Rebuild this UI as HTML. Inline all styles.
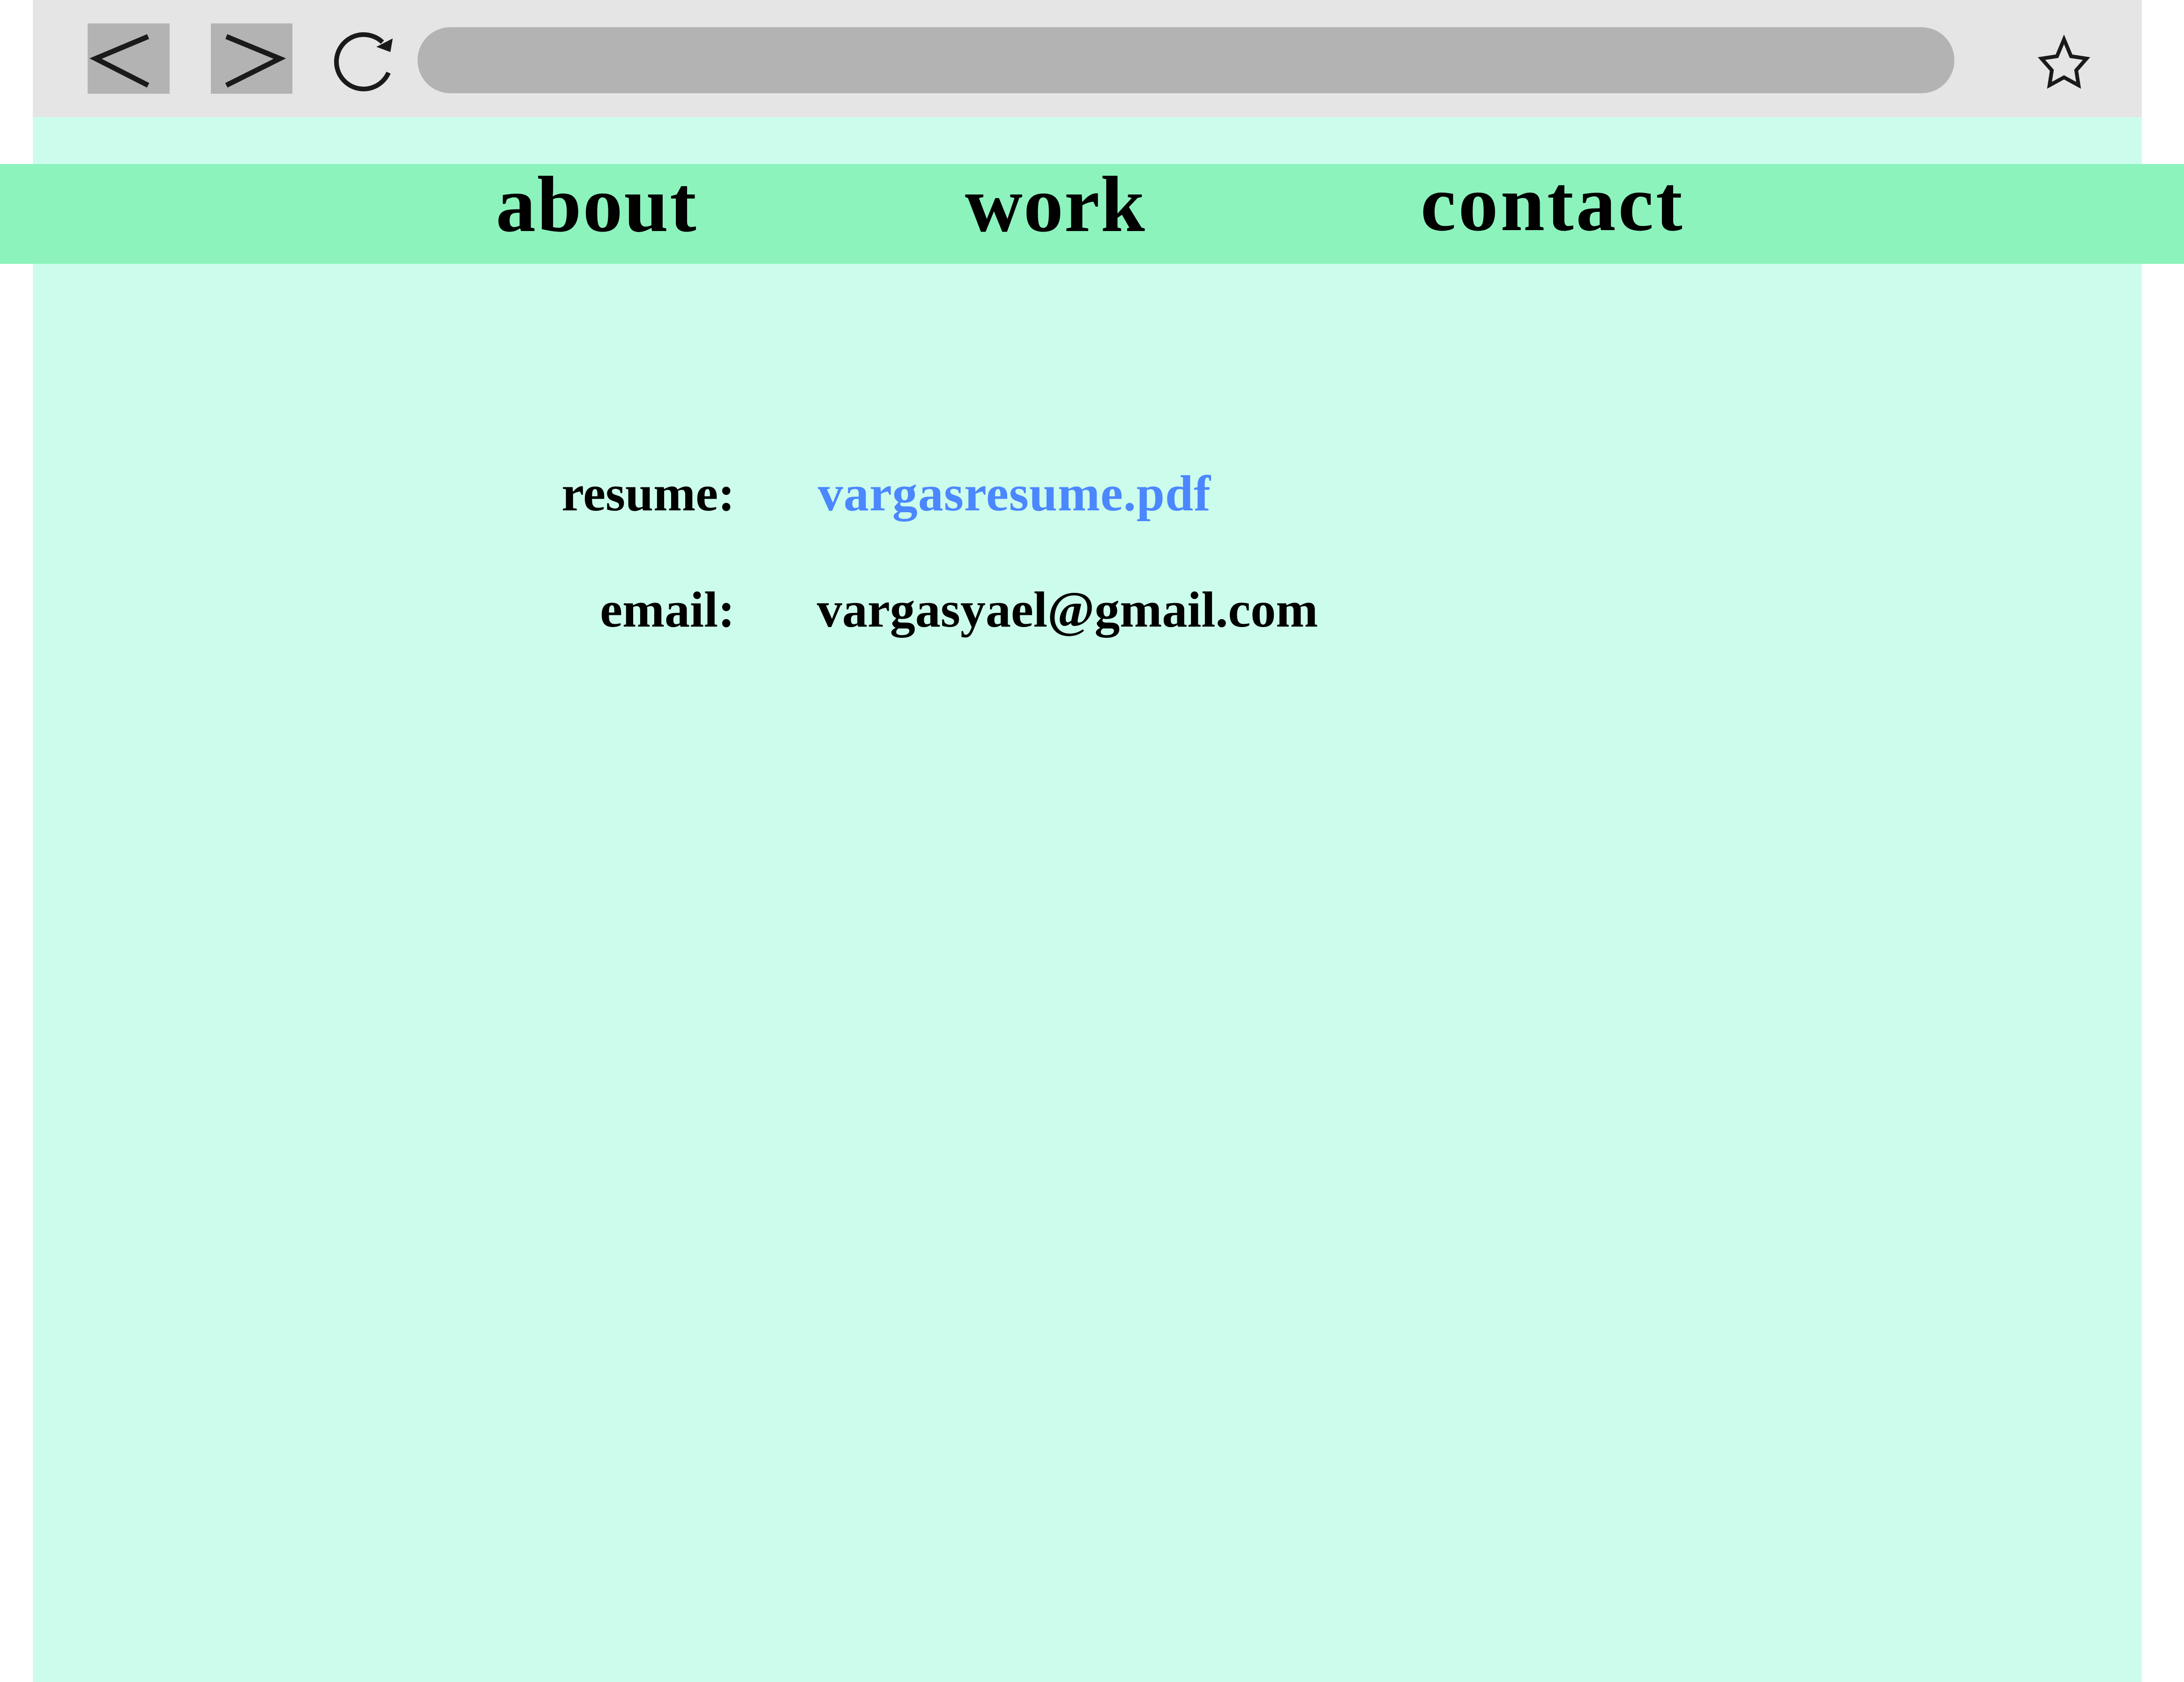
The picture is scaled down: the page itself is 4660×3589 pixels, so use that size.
<!DOCTYPE html>
<html><head><meta charset="utf-8">
<style>
html,body{margin:0;padding:0;}
body{width:4660px;height:3589px;position:relative;background:#fff;overflow:hidden;font-family:"Liberation Serif",serif;font-weight:bold;}
.abs{position:absolute;}
.t{position:absolute;line-height:1;white-space:nowrap;color:#000;}
</style></head><body>
<div class="abs" style="left:70px;top:0;width:4500px;height:3589px;background:#ccfdec"></div>
<div class="abs" style="left:70px;top:0;width:4500px;height:250px;background:#e5e5e5"></div>
<div class="abs" style="left:187px;top:50px;width:175px;height:150px;background:#b3b3b3"></div>
<div class="abs" style="left:450px;top:50px;width:174px;height:150px;background:#b3b3b3"></div>
<div class="abs" style="left:891px;top:58px;width:3279px;height:141px;background:#b3b3b3;border-radius:70px"></div>
<svg class="abs" style="left:0;top:0" width="4660" height="250">
<polyline points="316,78 204,125 316,182" fill="none" stroke="#1a1a1a" stroke-width="11"/>
<polyline points="483,78 597,125 483,182" fill="none" stroke="#1a1a1a" stroke-width="11"/>
<path d="M829,155 A58,58 0 1 1 816,90" fill="none" stroke="#1a1a1a" stroke-width="10"/>
<polygon points="803,100 838,82 833,111" fill="#1a1a1a"/>
<polygon points="4404,84 4419,120 4452,125 4430,150 4435,182 4404,165 4373,182 4378,150 4356,125 4389,120" fill="none" stroke="#1a1a1a" stroke-width="8" stroke-linejoin="miter"/>
</svg>
<div class="abs" style="left:0;top:350px;width:4660px;height:213px;background:#8cf3bd"></div>
<div class="t" style="left:1058px;top:351px;font-size:170px;letter-spacing:3px">about</div>
<div class="t" style="left:2059px;top:351px;font-size:170px;letter-spacing:2px">work</div>
<div class="t" style="left:3031px;top:349px;font-size:170px;letter-spacing:5px">contact</div>
<div class="t" style="right:3092px;top:1000px;font-size:108px">resume:</div>
<div class="t" style="left:1745px;top:1000px;font-size:108px;color:#4b87ff;letter-spacing:1px">vargasresume.pdf</div>
<div class="t" style="right:3092px;top:1248px;font-size:108px">email:</div>
<div class="t" style="left:1743px;top:1248px;font-size:108px">vargasyael@gmail.com</div>
</body></html>
